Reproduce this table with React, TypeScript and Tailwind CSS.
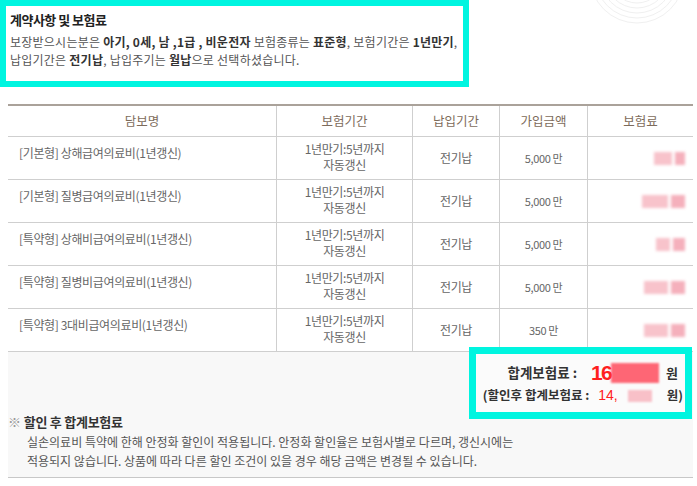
import React from 'react'

const rows = [
  { name: '[기본형] 상해급여의료비(1년갱신)', amount: '5,000 만', blur: [18, 10] },
  { name: '[기본형] 질병급여의료비(1년갱신)', amount: '5,000 만', blur: [26, 14] },
  { name: '[특약형] 상해비급여의료비(1년갱신)', amount: '5,000 만', blur: [14, 12] },
  { name: '[특약형] 질병비급여의료비(1년갱신)', amount: '5,000 만', blur: [24, 14] },
  { name: '[특약형] 3대비급여의료비(1년갱신)', amount: '350 만', blur: [24, 14] },
]

function Blur({ a, b }: { a: number; b: number }) {
  return (
    <div className="flex items-center gap-[3px] blur-[1.5px]">
      <div className="h-[13px] bg-[#f8c3cb]" style={{ width: a }} />
      <div className="h-[13px] bg-[#f5b0bc]" style={{ width: b }} />
    </div>
  )
}

export default function App() {
  return (
    <div className="relative w-[697px] h-[486px] overflow-hidden bg-white text-[#555] font-['Noto_Sans_CJK_KR','Noto_Sans',sans-serif]">
      {/* decoration */}
      <svg className="absolute left-[580px] top-0" width="117" height="30" viewBox="0 0 117 30">
        {[47, 42, 37, 32, 27, 22].map((r) => (
          <circle key={r} cx="57" cy="-24" r={r} fill="none" stroke="#f0f0f0" strokeWidth="1" />
        ))}
      </svg>

      {/* Contract summary */}
      <div className="relative w-[469px] h-[87px] border-[6px] border-[#00f5e0] px-[4px] pt-[5px] bg-white">
        <div className="text-[13px] font-bold text-[#222] leading-[18px] tracking-[-0.04em]">계약사항 및 보험료</div>
        <div className="mt-[4px] text-[12px] leading-[18px] tracking-[0.02em] text-[#555] whitespace-nowrap">
          <div>
            보장받으시는분은 <b className="text-[#333]">아기, 0세, 남 ,1급 , 비운전자</b> 보험종류는 <b className="text-[#333]">표준형</b>, 보험기간은 <b className="text-[#333]">1년만기</b>,
          </div>
          <div>
            납입기간은 <b className="text-[#333]">전기납</b>, 납입주기는 <b className="text-[#333]">월납</b>으로 선택하셨습니다.
          </div>
        </div>
      </div>

      {/* Table */}
      <div className="ml-[8px] mt-[17px] w-[685px] border-t-2 border-[#aaa29a]">
        <div className="grid grid-cols-[269px_136px_87px_88px_105px] h-[31px] border-b border-[#cfcfcf] text-[12.5px] text-[#7d6b5b]">
          <div className="flex items-center justify-center border-r border-[#cfcfcf]">담보명</div>
          <div className="flex items-center justify-center border-r border-[#cfcfcf]">보험기간</div>
          <div className="flex items-center justify-center border-r border-[#cfcfcf]">납입기간</div>
          <div className="flex items-center justify-center border-r border-[#cfcfcf]">가입금액</div>
          <div className="flex items-center justify-center">보험료</div>
        </div>
        {rows.map((r) => (
          <div
            key={r.name}
            className="grid grid-cols-[269px_136px_87px_88px_105px] h-[43px] border-b border-[#cfcfcf] text-[12px] text-[#666] tracking-[-0.03em]"
          >
            <div className="pl-[11px] pt-[7px] border-r border-[#cfcfcf] leading-[17px]">{r.name}</div>
            <div className="flex flex-col items-center justify-center border-r border-[#cfcfcf] leading-[16px] -mt-[2px]">
              <span>1년만기:5년까지</span>
              <span>자동갱신</span>
            </div>
            <div className="flex items-center justify-center border-r border-[#cfcfcf]">전기납</div>
            <div className="flex items-center justify-center border-r border-[#cfcfcf] text-[11px]">{r.amount}</div>
            <div className="flex items-center justify-end pr-[8px]">
              <Blur a={r.blur[0]} b={r.blur[1]} />
            </div>
          </div>
        ))}

        {/* Summary area */}
        <div className="flex flex-col justify-end h-[126px] bg-[#f8f8f8] border-b border-[#c8c8c8] pb-[7px]">
          <div className="text-[13px] leading-[18px] tracking-[-0.02em] whitespace-nowrap">
            <span className="text-[#999] mr-[3px]">※</span>
            <b className="text-[#333]">할인 후 합계보험료</b>
          </div>
          <div className="pl-[19px] mt-[1px] text-[12px] leading-[19px] text-[#555] whitespace-nowrap">
            <div>실손의료비 특약에 한해 안정화 할인이 적용됩니다. 안정화 할인율은 보험사별로 다르며, 갱신시에는</div>
            <div>적용되지 않습니다. 상품에 따라 다른 할인 조건이 있을 경우 해당 금액은 변경될 수 있습니다.</div>
          </div>
        </div>
      </div>

      {/* Totals highlight */}
      <div className="absolute left-[469px] top-[347px] w-[223px] h-[72px] border-[7px] border-[#00f5e0] bg-[#fbfbfb] flex flex-col justify-center gap-[1px] pr-[2px] text-[#333] whitespace-nowrap">
        <div className="flex items-center justify-end h-[24px] pr-[5px]">
          <span className="text-[13.5px] font-bold">합계보험료 :</span>
          <span className="ml-[14px] text-[21px] font-bold text-[#ff1f1f] leading-none tracking-[-0.08em] font-['Liberation_Sans',sans-serif]">16</span>
          <div className="w-[48px] h-[20px] bg-[#ff4d5e] blur-[1px] opacity-85" />
          <span className="ml-[7px] text-[13px] font-bold">원</span>
        </div>
        <div className="flex items-center justify-end h-[20px]">
          <span className="text-[12.5px] font-bold">(할인후 합계보험료 :</span>
          <span className="ml-[9px] text-[14px] text-[#ff2020] font-['Liberation_Sans',sans-serif]">14,</span>
          <div className="w-[44px] h-[16px] flex items-center justify-center">
            <div className="w-[24px] h-[12px] bg-[#f8c0c8] blur-[1px]" />
          </div>
          <span className="ml-[5px] text-[12.5px] font-bold">원)</span>
        </div>
      </div>
    </div>
  )
}
